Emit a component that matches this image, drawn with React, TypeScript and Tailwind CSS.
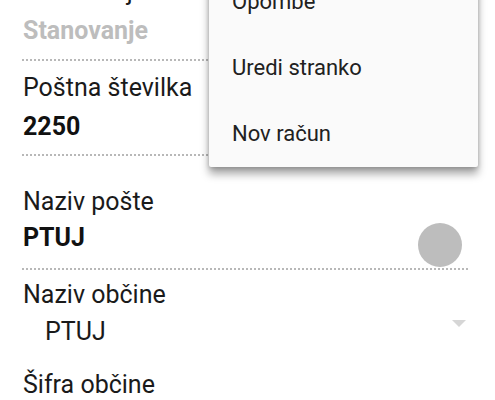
import React from "react";

const Dots = () => (
  <div className="h-[2px] w-full bg-[linear-gradient(to_right,#b8b8b8_50%,transparent_50%)] bg-[length:4px_2px]" />
);

const App = () => {
  return (
    <div className="relative w-[495px] h-[400px] overflow-hidden bg-white font-['Roboto',sans-serif] text-[25px] leading-[28px]">

      {/* scrolled form, first row partly off screen */}
      <div className="flex flex-col pl-[22px] pr-[25px] -mt-[22px]">
        <div className="flex flex-col pl-px">
          <span className="text-[#1a1a1a]">Stanovanje</span>
          <span className="mt-[11px] font-bold text-[#bdbdbd]">Stanovanje</span>
        </div>
        <div className="mt-[14px]"><Dots /></div>

        <div className="flex flex-col pl-px pt-[13px]">
          <span className="text-[#1a1a1a]">Poštna številka</span>
          <span className="mt-[11px] font-bold text-[#111]">2250</span>
        </div>
        <div className="mt-[13px]"><Dots /></div>

        <div className="flex items-end justify-between pt-[32px]">
          <div className="flex flex-col pl-px">
            <span className="text-[#1a1a1a]">Naziv pošte</span>
            <span className="mt-[8px] font-bold text-[#111]">PTUJ</span>
          </div>
          <div className="w-[44px] h-[44px] rounded-full bg-[#bdbdbd] mr-[8px] -mb-[15px]" />
        </div>
        <div className="mt-[16px]"><Dots /></div>

        <div className="flex flex-col pl-px pt-[11px]">
          <span className="text-[#1a1a1a]">Naziv občine</span>
          <div className="mt-[9px] flex items-start justify-between">
            <span className="pl-[22px] text-[#1a1a1a]">PTUJ</span>
            <svg width="14" height="8" viewBox="0 0 14 8" className="mt-[2px] mr-[4px]">
              <polygon points="0,0 14,0 7,7" fill="#d6d6d6" />
            </svg>
          </div>
        </div>

        <div className="flex flex-col pl-px pt-[25px]">
          <span className="text-[#1a1a1a]">Šifra občine</span>
        </div>
      </div>

      {/* overflow menu */}
      <div className="absolute left-[209px] top-[-31px] w-[269px] bg-[#fafafa] rounded-[2px] shadow-[0_7px_8px_rgba(0,0,0,0.35),0_1px_4px_rgba(0,0,0,0.2)] flex flex-col text-[22px] leading-[26px] text-[#212121]">
        <div className="h-[66px] flex items-center pl-[23px]">Opombe</div>
        <div className="h-[66px] flex items-center pl-[23px]">Uredi stranko</div>
        <div className="h-[66px] flex items-center pl-[23px]">Nov račun</div>
      </div>
    </div>
  );
};

export default App;
